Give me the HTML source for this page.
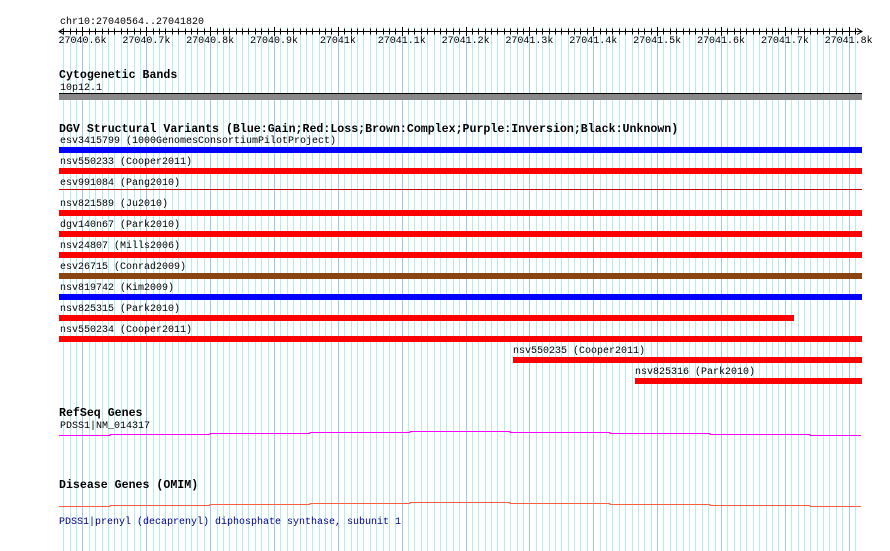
<!DOCTYPE html>
<html><head><style>
body{margin:0;width:890px;height:551px;background:#fff;position:relative;overflow:hidden;font-family:"Liberation Mono",monospace;}
.t{position:absolute;font-size:10px;line-height:10px;color:#000;white-space:pre;margin-top:2px;}
.h{position:absolute;font-size:11.6px;line-height:12px;font-weight:bold;white-space:pre;margin-top:2px;}
.b{position:absolute;height:6px;background:#f00;}
.ax{position:absolute;font-size:10px;line-height:10px;width:60px;text-align:center;margin-left:-30px;top:37px;}
</style></head><body>
<svg style="position:absolute;left:0;top:0" width="890" height="551"><g id="grid" stroke-width="1"></g></svg>
<div class="t" style="left:60px;top:16px">chr10:27040564..27041820</div>
<svg style="position:absolute;left:0;top:0" width="890" height="40">
<line x1="59" y1="31.5" x2="861" y2="31.5" stroke="#000"/>
<path d="M64 28.5L59 31.5L64 34.5M857 28.5L862 31.5L857 34.5" fill="none" stroke="#000"/>
<g stroke="#000" id="tk"></g>
</svg>
<div id="axl"></div>
<div class="h" style="left:59px;top:68px">Cytogenetic Bands</div>
<div class="t" style="left:60px;top:82px">10p12.1</div>
<div style="position:absolute;left:59px;top:93px;width:803px;height:1px;background:#000"></div>
<div style="position:absolute;left:59px;top:94px;width:803px;height:6px;background:#888"></div>
<div class="h" style="left:59px;top:122px">DGV Structural Variants (Blue:Gain;Red:Loss;Brown:Complex;Purple:Inversion;Black:Unknown)</div>
<div class="t" style="left:60px;top:135px">esv3415799 (1000GenomesConsortiumPilotProject)</div>
<div class="b" style="left:59px;top:147px;width:803px;background:#00f"></div>
<div class="t" style="left:60px;top:156px">nsv550233 (Cooper2011)</div>
<div class="b" style="left:59px;top:168px;width:803px"></div>
<div class="t" style="left:60px;top:177px">esv991084 (Pang2010)</div>
<div class="b" style="left:59px;top:189px;width:803px;height:1px;background:#c00"></div>
<div class="t" style="left:60px;top:198px">nsv821589 (Ju2010)</div>
<div class="b" style="left:59px;top:210px;width:803px"></div>
<div class="t" style="left:60px;top:219px">dgv140n67 (Park2010)</div>
<div class="b" style="left:59px;top:231px;width:803px"></div>
<div class="t" style="left:60px;top:240px">nsv24807 (Mills2006)</div>
<div class="b" style="left:59px;top:252px;width:803px"></div>
<div class="t" style="left:60px;top:261px">esv26715 (Conrad2009)</div>
<div class="b" style="left:59px;top:273px;width:803px;background:#8b4513"></div>
<div class="t" style="left:60px;top:282px">nsv819742 (Kim2009)</div>
<div class="b" style="left:59px;top:294px;width:803px;background:#00f"></div>
<div class="t" style="left:60px;top:303px">nsv825315 (Park2010)</div>
<div class="b" style="left:59px;top:315px;width:735px"></div>
<div class="t" style="left:60px;top:324px">nsv550234 (Cooper2011)</div>
<div class="b" style="left:59px;top:336px;width:803px"></div>
<div class="t" style="left:513px;top:345px">nsv550235 (Cooper2011)</div>
<div class="b" style="left:513px;top:357px;width:349px"></div>
<div class="t" style="left:635px;top:366px">nsv825316 (Park2010)</div>
<div class="b" style="left:635px;top:378px;width:227px"></div>
<div class="h" style="left:59px;top:406px">RefSeq Genes</div>
<div class="t" style="left:60px;top:420px">PDSS1|NM_014317</div>
<svg style="position:absolute;left:0;top:420px" width="890" height="100">
<path d="M59 15.5H110V14.5H210V13.5H310V12.5H410V11.5H510V12.5H610V13.5H710V14.5H810V15.5H861" fill="none" stroke="#f0f"/>
<path d="M59 86.5H110V85.5H210V84.5H310V83.5H410V82.5H510V83.5H610V84.5H710V85.5H810V86.5H861" fill="none" stroke="#ff6040"/>
</svg>
<div class="h" style="left:59px;top:478px">Disease Genes (OMIM)</div>
<div class="t" style="left:59px;top:516px;color:#00008b">PDSS1|prenyl (decaprenyl) diphosphate synthase, subunit 1</div>
<script>
var g=document.getElementById('tk'),s='',gr='';
for(var i=0;i<=125;i++){var x=Math.round(63.3+i*6.385)+0.5;if(x>861)break;var maj=(i%10==3);
if(x<858)s+='<line x1="'+x+'" x2="'+x+'" y1="'+(maj?27:28.5)+'" y2="'+(maj?36:34.5)+'"/>';
gr+='<line x1="'+x+'" x2="'+x+'" y1="27" y2="551" stroke="'+(maj?'#9cc8ec':'#b4ecf0')+'"/>';}
g.innerHTML=s;document.getElementById('grid').innerHTML=gr;
var labs=['27040.6k','27040.7k','27040.8k','27040.9k','27041k','27041.1k','27041.2k','27041.3k','27041.4k','27041.5k','27041.6k','27041.7k','27041.8k'],h='';
for(var j=0;j<labs.length;j++){h+='<div class="ax" style="left:'+(82.5+j*63.85)+'px">'+labs[j]+'</div>';}
document.getElementById('axl').innerHTML=h;
</script>
</body></html>
